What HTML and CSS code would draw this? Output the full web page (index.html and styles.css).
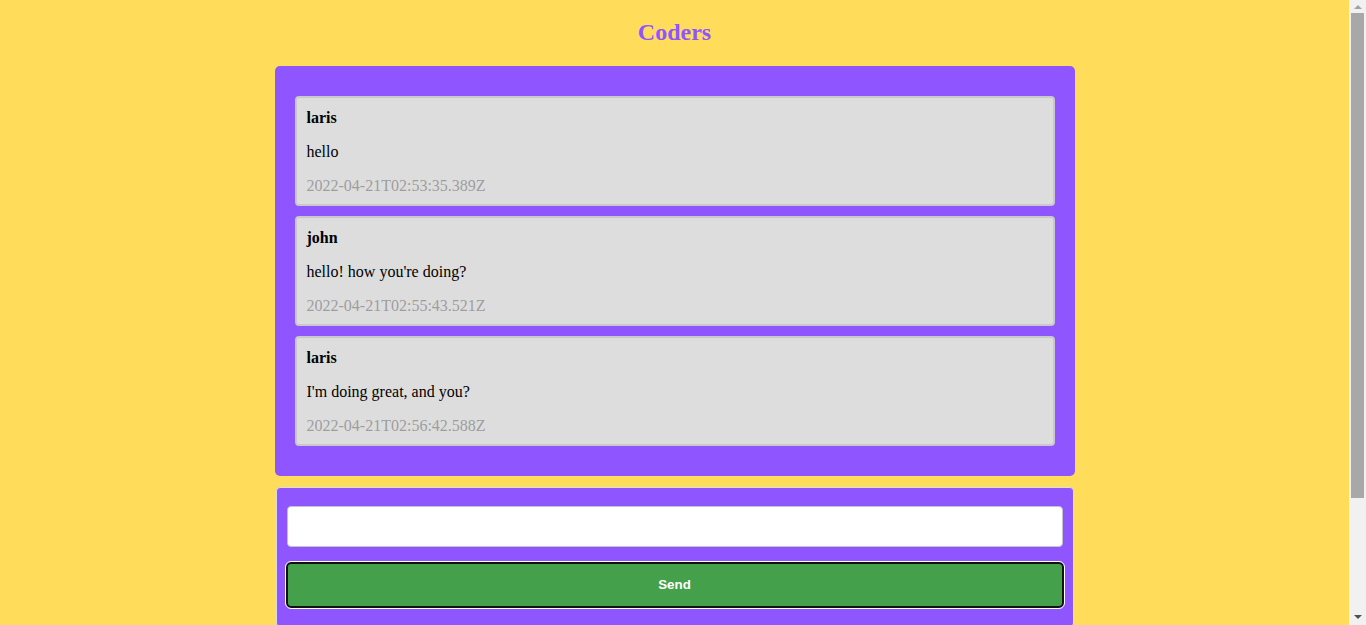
FILE: index.html
```html
<!DOCTYPE html>
<html lang="en">
<head>
<meta charset="utf-8">
<title>Coders</title>
<link rel="stylesheet" href="styles.css">
</head>
<body>
  <div class="page">
    <h1 class="title">Coders</h1>
    <div class="chat">
      <div class="message">
        <p class="author">laris</p>
        <p class="text">hello</p>
        <p class="time">2022-04-21T02:53:35.389Z</p>
      </div>
      <div class="message">
        <p class="author">john</p>
        <p class="text">hello! how you're doing?</p>
        <p class="time">2022-04-21T02:55:43.521Z</p>
      </div>
      <div class="message">
        <p class="author">laris</p>
        <p class="text">I'm doing great, and you?</p>
        <p class="time">2022-04-21T02:56:42.588Z</p>
      </div>
    </div>
    <form class="composer">
      <input class="field" type="text">
      <button class="send" type="button">Send</button>
    </form>
  </div>
  <div class="scrollbar" aria-hidden="true">
    <div class="arrow">
      <svg width="8" height="4" viewBox="0 0 8 4"><path d="M0 4 L4 0 L8 4 Z" fill="#a3a3a3"/></svg>
    </div>
    <div class="track"><div class="thumb"></div></div>
    <div class="arrow arrow-down">
      <svg width="8" height="4" viewBox="0 0 8 4"><path d="M0 0 L8 0 L4 4 Z" fill="#505050"/></svg>
    </div>
  </div>
</body>
</html>
```
FILE: styles.css
```css
html, body {
  margin: 0;
  padding: 0;
}
body {
  background: #ffdd5a;
  font-family: "Liberation Serif", "Times New Roman", serif;
  font-size: 16px;
  display: flex;
  height: 625px;
  overflow: hidden;
}
.page {
  flex: 1;
  min-width: 0;
  overflow: hidden;
}
.title {
  margin: 0 0 20px;
  padding-top: 18px;
  font-size: 24px;
  line-height: 28px;
  font-weight: bold;
  text-align: center;
  color: #8f55ff;
}
.chat {
  box-sizing: border-box;
  width: 800px;
  margin: 0 auto;
  padding: 30px 20px;
  background: #8f55ff;
  border-radius: 5px;
  display: flex;
  flex-direction: column;
  gap: 10px;
}
.message {
  background: #dddddd;
  border: 2px solid #c9c9c9;
  border-radius: 4px;
  padding: 11px 10px 9px;
  display: flex;
  flex-direction: column;
  gap: 16px;
}
.message p {
  margin: 0;
  line-height: 18px;
}
.author {
  font-weight: bold;
  color: #000;
}
.text {
  color: #000;
}
.time {
  color: #9d9d9d;
}
.composer {
  box-sizing: border-box;
  width: 798px;
  margin: 11px auto 0;
  padding: 18px 10px;
  background: #8f55ff;
  border: 1px solid #dcdcdc;
  border-radius: 4px;
  display: flex;
  flex-direction: column;
  gap: 15px;
}
.field {
  box-sizing: border-box;
  width: 100%;
  height: 41px;
  margin: 0;
  border: 1px solid #c4c4c4;
  border-radius: 4px;
  background: #fff;
}
.send {
  box-sizing: border-box;
  width: 778px;
  height: 46px;
  margin: 0 -1px;
  padding: 0 0 2px;
  background: #44a04a;
  color: #fff;
  border: 2px solid #111;
  border-radius: 5px;
  outline: 1px solid #fff;
  font-family: "Liberation Sans", Arial, sans-serif;
  font-size: 13.33px;
  font-weight: 600;
}
.scrollbar {
  flex: 0 0 17px;
  width: 17px;
  height: 625px;
  background: #f1f1f1;
  display: flex;
  flex-direction: column;
}
.arrow {
  height: 13px;
  display: flex;
  align-items: center;
  justify-content: center;
  padding-top: 1px;
  box-sizing: border-box;
}
.arrow-down {
  height: 17px;
  padding-top: 0;
}
.track {
  flex: 1;
  padding: 0 2px;
}
.thumb {
  height: 485px;
  background: #a8a8a8;
}
.arrow svg {
  display: block;
}
```
